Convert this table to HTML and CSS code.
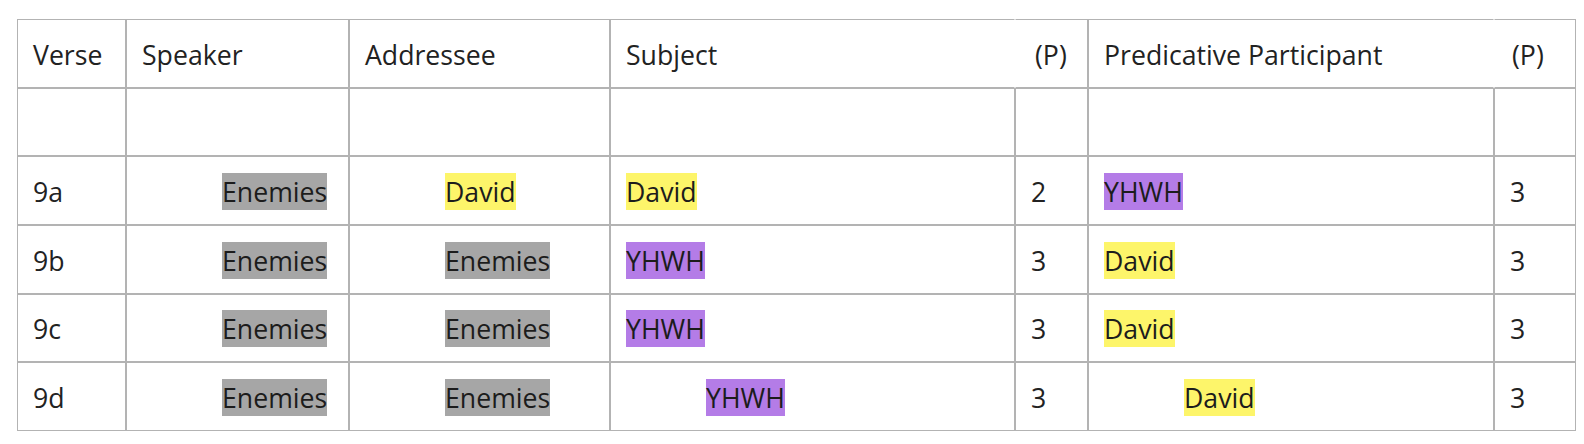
FILE: index.html
```html
<!DOCTYPE html>
<html lang="en">
<head>
<meta charset="utf-8">
<title>Participants</title>
<link rel="stylesheet" href="styles.css">
</head>
<body>
<div class="page">
<table class="grid">
  <colgroup>
    <col class="c-verse">
    <col class="c-speaker">
    <col class="c-addressee">
    <col class="c-subject">
    <col class="c-p1">
    <col class="c-pred">
    <col class="c-p2">
  </colgroup>
  <thead>
    <tr>
      <th>Verse</th>
      <th>Speaker</th>
      <th>Addressee</th>
      <th class="join-r">Subject</th>
      <th class="join-l p-first">(P)</th>
      <th class="join-r">Predicative Participant</th>
      <th class="join-l">(P)</th>
    </tr>
  </thead>
  <tbody>
    <tr>
      <td>&nbsp;</td><td>&nbsp;</td><td>&nbsp;</td><td>&nbsp;</td><td>&nbsp;</td><td>&nbsp;</td><td>&nbsp;</td>
    </tr>
    <tr>
      <td>9a</td>
      <td class="ind"><span class="hl gray">Enemies</span></td>
      <td class="ind"><span class="hl yellow">David</span></td>
      <td><span class="hl yellow">David</span></td>
      <td>2</td>
      <td><span class="hl purple">YHWH</span></td>
      <td>3</td>
    </tr>
    <tr>
      <td>9b</td>
      <td class="ind"><span class="hl gray">Enemies</span></td>
      <td class="ind"><span class="hl gray">Enemies</span></td>
      <td><span class="hl purple">YHWH</span></td>
      <td>3</td>
      <td><span class="hl yellow">David</span></td>
      <td>3</td>
    </tr>
    <tr>
      <td>9c</td>
      <td class="ind"><span class="hl gray">Enemies</span></td>
      <td class="ind"><span class="hl gray">Enemies</span></td>
      <td><span class="hl purple">YHWH</span></td>
      <td>3</td>
      <td><span class="hl yellow">David</span></td>
      <td>3</td>
    </tr>
    <tr>
      <td>9d</td>
      <td class="ind"><span class="hl gray">Enemies</span></td>
      <td class="ind"><span class="hl gray">Enemies</span></td>
      <td class="ind"><span class="hl purple">YHWH</span></td>
      <td>3</td>
      <td class="ind"><span class="hl yellow">David</span></td>
      <td>3</td>
    </tr>
  </tbody>
</table>
</div>
</body>
</html>
```
FILE: styles.css
```css
html, body {
  margin: 0;
  padding: 0;
  background: #ffffff;
}

.page {
  padding: 19px 8px 0 17px;
  font-family: "Open Sans", "Noto Sans", sans-serif;
  font-size: 26.67px;
  color: #222222;
}

.grid {
  table-layout: fixed;
  width: 1559px;
  border-collapse: separate;
  border-spacing: 0;
}

.c-verse { width: 109px; }
.c-speaker { width: 223px; }
.c-addressee { width: 261px; }
.c-subject { width: 405px; }
.c-p1 { width: 73px; }
.c-pred { width: 406px; }
.c-p2 { width: 82px; }

.grid th,
.grid td {
  border: 1px solid #b3b3b3;
  padding: 16.6px 15px 14.1px;
  line-height: 36px;
  text-align: left;
  vertical-align: middle;
  font-weight: normal;
  white-space: nowrap;
  overflow: hidden;
}

.grid th.join-r {
  border-right-color: transparent;
}

.grid th.join-l {
  border-left-color: transparent;
  padding-left: 17px;
}

.grid th.p-first {
  padding-left: 19px;
}

.grid td.ind {
  padding-left: 95px;
}

.hl {
  color: #1c1c1c;
}

.gray { background: #a6a6a6; }
.yellow { background: #fdf56a; }
.purple { background: #b47ce7; }
```
